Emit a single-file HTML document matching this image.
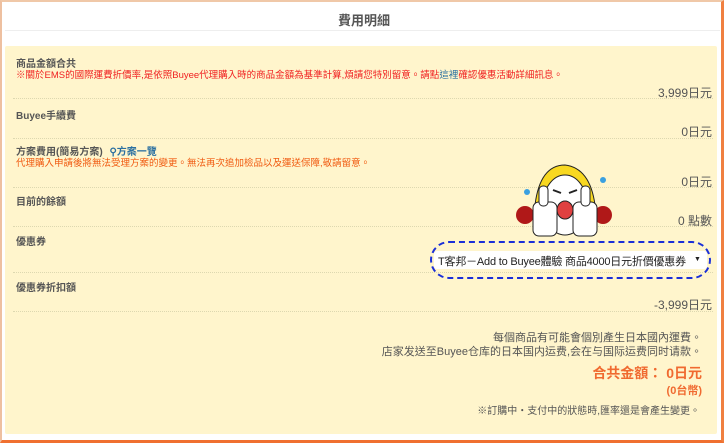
<!DOCTYPE html>
<html><head><meta charset="utf-8"><style>
*{margin:0;padding:0;box-sizing:border-box}
body{width:728px;height:444px;background:#fff;font-family:"Liberation Sans","Noto Sans CJK TC",sans-serif;color:#555;position:relative;overflow:hidden}
.frame{position:absolute;left:0;top:0;width:724px;height:443px;border:2px solid #eec0a0;border-right:3px solid #f08040;border-bottom:3px solid #f07030;border-top:2px solid #f0c8a8}
.title{position:absolute;left:0;width:728px;top:10px;text-align:center;font-size:13px;font-weight:bold;color:#555}
.hline{position:absolute;left:5px;width:715px;top:30px;border-top:1px solid #eee}
.panel{position:absolute;left:5px;top:46px;width:712px;height:388px;background:#fff5cc;border-radius:2px}
.t{position:absolute;white-space:nowrap;font-size:10px}
.b{font-weight:bold}
.r{right:16px;text-align:right;font-size:12px}
.div{position:absolute;left:13px;width:700px;border-top:1px dotted #ddd8b0;height:0}
.red{color:#f02020}
.org{color:#f05a10}
</style></head><body>
<div class="frame"></div>
<div class="title">費用明細</div>
<div class="hline"></div>
<div class="panel"></div>
<div class="t b" style="left:16px;top:55px">商品金額合共</div>
<div class="t red" style="left:16px;top:67px;font-size:9.5px">※關於EMS的國際運費折價率,是依照Buyee代理購入時的商品金額為基準計算,煩請您特別留意。請點<span style="color:#2a6fa0">這裡</span>確認優惠活動詳細訊息。</div>
<div class="t r" style="top:84px">3,999日元</div>
<div class="div" style="top:98px"></div>
<div class="t b" style="left:16px;top:107px">Buyee手續費</div>
<div class="t r" style="top:123px">0日元</div>
<div class="div" style="top:138px"></div>
<div class="t b" style="left:16px;top:143px">方案費用(簡易方案) <span style="margin-left:4px;color:#2a6fa0">⚲方案一覽</span></div>
<div class="t org" style="left:16px;top:155px;font-size:9.5px">代理購入申請後將無法受理方案的變更。無法再次追加檢品以及運送保障,敬請留意。</div>
<div class="t r" style="top:173px">0日元</div>
<div class="div" style="top:187px"></div>
<div class="t b" style="left:16px;top:193px">目前的餘額</div>
<div class="t r" style="top:212px">0 點數</div>
<div class="div" style="top:226px"></div>
<div class="t b" style="left:16px;top:233px">優惠券</div>
<div style="position:absolute;left:430px;top:241px;width:281px;height:38px;border:2.5px dashed #1a2fd8;border-radius:19px"></div>
<div style="position:absolute;left:434px;top:251px;width:273px;height:18px;background:#fff;border-radius:3px"></div>
<div class="t" style="left:438px;top:253px;font-size:11px;color:#222;letter-spacing:-0.2px">T客邦－Add to Buyee體驗 商品4000日元折價優惠券</div>
<div class="t" style="left:694px;top:256px;font-size:7px;color:#222">▼</div>
<div class="div" style="top:272px"></div>
<div class="t b" style="left:16px;top:279px">優惠券折扣額</div>
<div class="t r" style="top:296px">-3,999日元</div>
<div class="div" style="top:311px"></div>
<div class="t r" style="top:329px;font-size:11px;right:26px">每個商品有可能會個別產生日本國內運費。</div>
<div class="t r" style="top:343px;font-size:11px;right:26px">店家发送至Buyee仓库的日本国内运费,会在与国际运费同时请款。</div>
<div class="t r b" style="top:363px;font-size:14px;color:#f06a30;right:26px">合共金額： 0日元</div>
<div class="t r b" style="top:382px;font-size:11px;color:#f06a30;right:26px">(0台幣)</div>
<div class="t r" style="top:402px;font-size:10px;right:28px">※訂購中・支付中的狀態時,匯率還是會產生變更。</div>
<svg style="position:absolute;left:515px;top:160px" width="100" height="80" viewBox="0 0 100 80">
<circle cx="10" cy="55" r="9" fill="#b01818"/><circle cx="88" cy="55" r="9" fill="#b01818"/>
<path d="M20 45 Q25 5 50 5 Q75 8 80 45 Z" fill="#f8d820" stroke="#222" stroke-width="1"/>
<ellipse cx="50" cy="45" rx="22" ry="30" fill="#fff" stroke="#222" stroke-width="1"/>
<path d="M38 30 l8 3 M62 30 l-8 3" stroke="#222" stroke-width="2"/>
<ellipse cx="50" cy="50" rx="8" ry="9" fill="#e04040" stroke="#222"/>
<path d="M30 38 q-4 10 -10 14 M70 38 q4 10 10 14" stroke="#3aa0e0" stroke-width="3" fill="none"/>
<rect x="18" y="42" width="24" height="34" rx="6" fill="#fff" stroke="#222"/>
<rect x="58" y="42" width="24" height="34" rx="6" fill="#fff" stroke="#222"/>
<rect x="24" y="26" width="9" height="20" rx="4" fill="#fff" stroke="#222"/>
<rect x="66" y="26" width="9" height="20" rx="4" fill="#fff" stroke="#222"/>
<circle cx="88" cy="20" r="3" fill="#3aa0e0"/><circle cx="12" cy="32" r="3" fill="#3aa0e0"/>
</svg>
</body></html>
